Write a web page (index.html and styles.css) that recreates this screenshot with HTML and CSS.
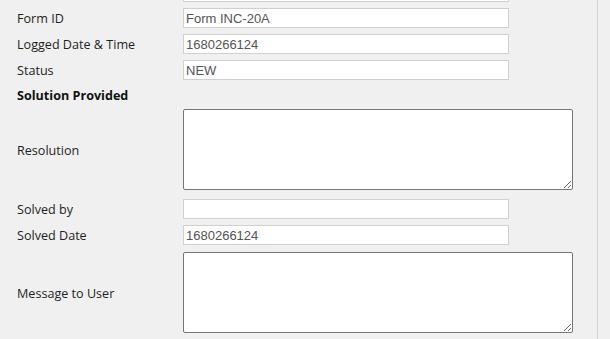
FILE: index.html
```html
<!DOCTYPE html>
<html lang="en">
<head>
    <meta charset="UTF-8">
    <meta name="viewport" content="width=device-width, initial-scale=1.0">
    <title>Incident Details</title>
    <link rel="stylesheet" href="styles.css">
</head>
<body>
    <div class="form-panel">
        <!-- Incident Section (scrolled) -->
        <div class="row row-first">
            <label class="field-label">Mobile Banking App</label>
            <input type="text" class="field-input" value="" readonly>
        </div>
        <div class="row">
            <label class="field-label">Form ID</label>
            <input type="text" class="field-input" value="Form INC-20A" readonly>
        </div>
        <div class="row">
            <label class="field-label">Logged Date &amp; Time</label>
            <input type="text" class="field-input" value="1680266124" readonly>
        </div>
        <div class="row">
            <label class="field-label">Status</label>
            <input type="text" class="field-input" value="NEW" readonly>
        </div>

        <!-- Solution Section -->
        <div class="section-title">Solution Provided</div>
        <div class="row row-area">
            <label class="field-label">Resolution</label>
            <textarea class="field-area"></textarea>
        </div>
        <div class="row">
            <label class="field-label">Solved by</label>
            <input type="text" class="field-input" value="">
        </div>
        <div class="row row-before-area">
            <label class="field-label">Solved Date</label>
            <input type="text" class="field-input" value="1680266124">
        </div>
        <div class="row row-area">
            <label class="field-label">Message to User</label>
            <textarea class="field-area"></textarea>
        </div>
    </div>
</body>
</html>
```

FILE: styles.css
```css
/* General Reset */
* {
    margin: 0;
    padding: 0;
    box-sizing: border-box;
}

body {
    background-color: #f0f0f0;
    font-family: 'Open Sans', sans-serif;
    overflow: hidden;
}

/* Panel */
.form-panel {
    display: flow-root;
    width: 598px;
    min-height: 339px;
    padding-left: 17px;
    border-right: 1px solid #d4d4d4;
}

.row {
    display: flex;
    align-items: center;
    margin-bottom: 6px;
}

.row-first {
    margin-top: -18px;
}

.row-area {
    margin-bottom: 9px;
}

.row-before-area {
    margin-bottom: 7px;
}

.field-label {
    width: 166px;
    padding-top: 1px;
    font-size: 12.6px;
    color: #1e1e1e;
}

.field-input {
    width: 326px;
    height: 20px;
    padding: 0 2px;
    border: 1px solid #d0d0d0;
    background-color: #fff;
    font-family: 'Liberation Sans', Arial, sans-serif;
    font-size: 13px;
    color: #555;
    outline: none;
}

.field-area {
    display: block;
    width: 390px;
    height: 81px;
    border: 1px solid #767676;
    border-radius: 2px;
    background-color: #fff;
    font-family: 'Liberation Sans', Arial, sans-serif;
    font-size: 13px;
}

/* Section Title */
.section-title {
    height: 17px;
    margin-bottom: 6px;
    font-size: 12.6px;
    font-weight: bold;
    color: #111;
    line-height: 19px;
}
```
